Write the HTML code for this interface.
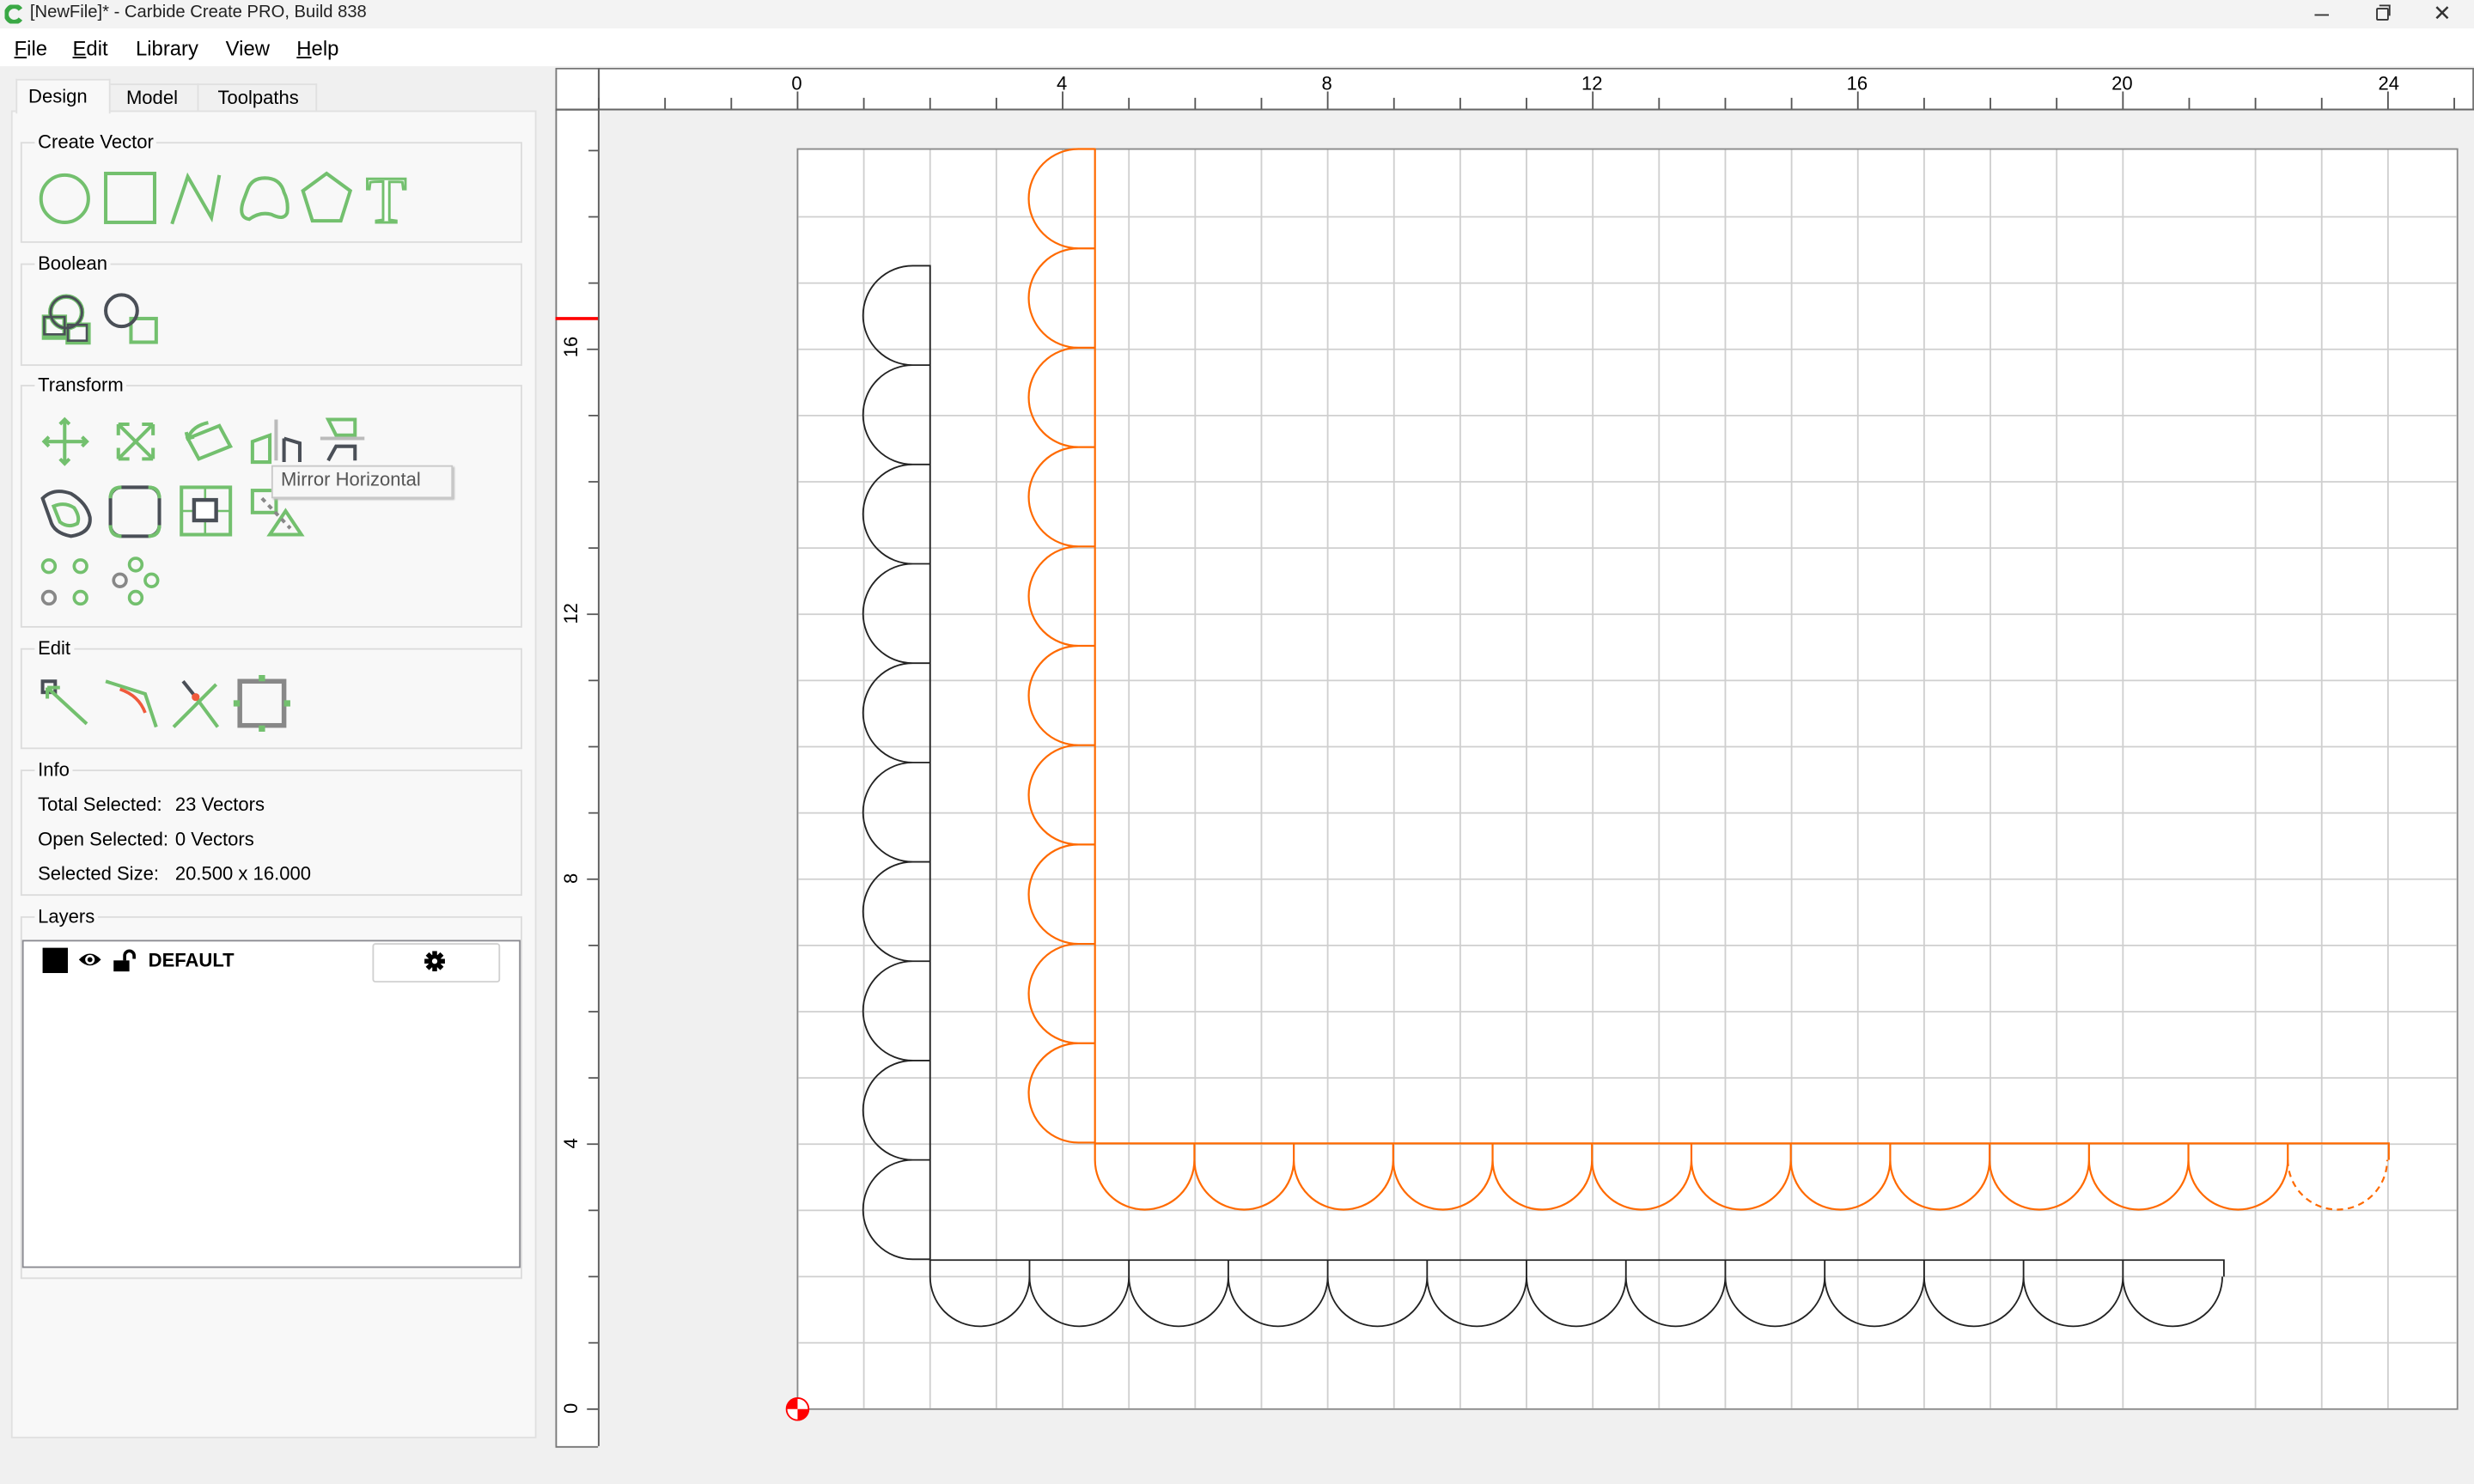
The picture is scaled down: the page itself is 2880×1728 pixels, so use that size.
<!DOCTYPE html>
<html><head><meta charset="utf-8">
<style>
html,body{margin:0;padding:0;width:2880px;height:1728px;overflow:hidden;background:#f0f0f0;}
#root{position:absolute;left:0;top:0;width:1568px;height:941px;transform-origin:0 0;transform:scale(1.83673,1.83634);font-family:"Liberation Sans",sans-serif;font-size:12px;color:#000;background:#f0f0f0;}
.abs{position:absolute;}
.grp{position:absolute;left:13px;width:316px;border:1px solid #dcdcdc;}
.gt{position:absolute;left:8px;top:-8px;background:#f8f8f8;padding:0 2px;font-size:12px;line-height:14px;}
.t{position:absolute;white-space:nowrap;}
</style></head><body><div id="root">
<div class="abs" style="left:0;top:0;width:1568px;height:18px;background:#f3f3f3"></div>
<svg class="abs" style="left:3px;top:3px" width="12" height="12" viewBox="0 0 12 12"><path d="M10 3 A5 5 0 1 0 10 9" fill="none" stroke="#3aa845" stroke-width="3"/></svg>
<div class="t" style="left:19px;top:2px;font-size:11px;color:#222">[NewFile]* - Carbide Create PRO, Build 838</div>
<div class="abs" style="left:1467px;top:9px;width:9px;height:1px;background:#333"></div>
<div class="abs" style="left:1506px;top:5px;width:6px;height:6px;border:1px solid #333;border-radius:1px"></div>
<div class="abs" style="left:1508px;top:3px;width:6px;height:6px;border-top:1px solid #333;border-right:1px solid #333"></div>
<div class="t" style="left:1542px;top:0px;font-size:14px;color:#333">✕</div>
<div class="abs" style="left:0;top:18px;width:1568px;height:24px;background:#fff"></div>
<div class="t" style="left:9px;top:23px;font-size:13px"><u>F</u>ile</div>
<div class="t" style="left:46px;top:23px;font-size:13px"><u>E</u>dit</div>
<div class="t" style="left:86px;top:23px;font-size:13px">Library</div>
<div class="t" style="left:143px;top:23px;font-size:13px">View</div>
<div class="t" style="left:188px;top:23px;font-size:13px"><u>H</u>elp</div>
<div class="abs" style="left:69px;top:53px;width:55px;height:17px;background:#f0f0f0;border:1px solid #e0e0e0;border-bottom:none"></div>
<div class="abs" style="left:125px;top:53px;width:74px;height:17px;background:#f0f0f0;border:1px solid #e0e0e0;border-bottom:none"></div>
<div class="abs" style="left:7px;top:70px;width:331px;height:840px;background:#f8f8f8;border:1px solid #e0e0e0"></div>
<div class="abs" style="left:10px;top:50px;width:58px;height:21px;background:#f8f8f8;border:1px solid #e0e0e0;border-bottom:none"></div>
<div class="t" style="left:18px;top:54px;font-size:12px">Design</div>
<div class="t" style="left:80px;top:55px;font-size:12px">Model</div>
<div class="t" style="left:138px;top:55px;font-size:12px">Toolpaths</div>
<div class="grp" style="top:90px;height:62px"><div class="gt">Create Vector</div></div>
<div class="grp" style="top:167px;height:63px"><div class="gt">Boolean</div></div>
<div class="grp" style="top:244px;height:152px"><div class="gt">Transform</div></div>
<div class="grp" style="top:411px;height:62px"><div class="gt">Edit</div></div>
<div class="grp" style="top:488px;height:78px"><div class="gt">Info</div></div>
<div class="grp" style="top:581px;height:228px"><div class="gt">Layers</div></div>
<div class="t" style="left:24px;top:503px">Total Selected:</div><div class="t" style="left:111px;top:503px">23 Vectors</div>
<div class="t" style="left:24px;top:525px">Open Selected:</div><div class="t" style="left:111px;top:525px">0 Vectors</div>
<div class="t" style="left:24px;top:547px">Selected Size:</div><div class="t" style="left:111px;top:547px">20.500 x 16.000</div>
<div class="abs" style="left:14px;top:596px;width:314px;height:206px;background:#fff;border:1px solid #8a8a90"></div>
<div class="abs" style="left:27px;top:601px;width:16px;height:16px;background:#000"></div>
<svg class="abs" style="left:49px;top:602px" width="16" height="13" viewBox="0 0 16 13"><path d="M1 6.5 Q8 -1 15 6.5 Q8 14 1 6.5Z" fill="#000"/><circle cx="8" cy="6.5" r="3" fill="#fff"/><circle cx="8" cy="6.5" r="1.6" fill="#000"/></svg>
<svg class="abs" style="left:71px;top:601px" width="16" height="16" viewBox="0 0 16 16"><rect x="1" y="8" width="10" height="7" fill="#000"/><path d="M8 8 V5 A3 3 0 0 1 14 5 V7" fill="none" stroke="#000" stroke-width="2"/></svg>
<div class="t" style="left:94px;top:602px;font-weight:bold;font-size:12px">DEFAULT</div>
<div class="abs" style="left:236px;top:598px;width:79px;height:23px;background:#fff;border:1px solid #d0d0d0;border-radius:2px"></div>
<svg class="abs" style="left:269px;top:603px" width="13" height="13" viewBox="0 0 13 13"><g fill="#000"><circle cx="6.5" cy="6.5" r="4.2"/><rect x="5" y="0" width="3" height="13"/><rect x="0" y="5" width="13" height="3"/><rect x="5" y="0" width="3" height="13" transform="rotate(45 6.5 6.5)"/><rect x="5" y="0" width="3" height="13" transform="rotate(-45 6.5 6.5)"/></g><circle cx="6.5" cy="6.5" r="1.7" fill="#fff"/></svg>
<svg class="abs" style="left:0;top:0" width="340" height="480" viewBox="0 0 340 480" fill="none" stroke-width="2.2">
<g stroke="#73c06e">
<ellipse cx="41" cy="126" rx="15" ry="15"/>
<rect x="67" y="110" width="31" height="31"/>
<path d="M109 142 L119 112 L134 138 L139 111"/>
<path d="M157 120 Q160 112 170 113 Q178 114 180 122 Q183 128 182 135 Q180 140 172 136 Q165 134 158 139 Q151 138 154 128Z"/>
<path d="M207 110 L222 121 L216 140 L198 140 L192 121Z"/>
</g>
<text x="232" y="141" font-family="Liberation Serif,serif" font-size="42" fill="#fff" stroke="#73c06e" stroke-width="1.6">T</text>
<rect x="28" y="201" width="13" height="13" stroke="#73c06e" stroke-width="3"/>
<rect x="43" y="206" width="13" height="11" stroke="#73c06e" stroke-width="3"/>
<circle cx="42" cy="198" r="10" stroke="#73c06e" stroke-width="3"/>
<circle cx="42" cy="198" r="10" stroke="#4a4f57" stroke-width="1.6"/>
<rect x="28" y="201" width="13" height="11" stroke="#4a4f57" stroke-width="1.4"/>
<rect x="43" y="206" width="12" height="10" stroke="#4a4f57" stroke-width="1.4"/>
<rect x="83" y="202" width="16" height="15" stroke="#73c06e"/>
<circle cx="77" cy="197" r="10" stroke="#4a4f57"/>
<g stroke="#73c06e">
<path d="M28 280 H55 M41 266 V294 M31 277 L28 280 L31 283 M52 277 L55 280 L52 283 M38 269 L41 266 L44 269 M38 291 L41 294 L44 291"/>
<path d="M75 269 L97 291 M97 269 L75 291 M75 269 h7 M75 269 v7 M97 269 h-7 M97 269 v7 M75 291 h7 M75 291 v-7 M97 291 h-7 M97 291 v-7"/>
<path d="M119 278 L139 270 L146 283 L126 291Z M119 278 Q122 270 132 268 M118 274 l1 4 l4 -1"/>
<path d="M160 293 V280 L171 276 V293Z"/>
<path d="M208 266 H225 V276 H213Z"/>
</g>
<path d="M175 266 V292" stroke="#bbb"/>
<path d="M180 278 L190 281 V293 M180 278 V293" stroke="#4a4f57"/>
<path d="M203 278 H231" stroke="#bbb"/>
<path d="M208 292 L213 283 H225 V292" stroke="#4a4f57"/>
<path d="M27 316 Q34 309 45 313 Q55 319 57 328 Q58 338 45 340 Q34 338 32 330Z" stroke="#4a4f57"/>
<path d="M34 321 Q41 318 47 322 Q51 328 49 332 Q43 335 38 331Z" stroke="#73c06e"/>
<rect x="70" y="309" width="31" height="31" rx="7" stroke="#4a4f57"/>
<path d="M70 316 Q70 309 77 309 M94 309 Q101 309 101 316 M70 333 Q70 340 77 340 M94 340 Q101 340 101 333" stroke="#73c06e"/>
<rect x="115" y="309" width="31" height="30" stroke="#73c06e"/>
<path d="M130 309 V339 M115 324 H146" stroke="#73c06e" stroke-width="1.4"/>
<rect x="123" y="317" width="14" height="13" stroke="#4a4f57" stroke-width="2.4" fill="#fff"/>
<rect x="160" y="311" width="15" height="14" stroke="#73c06e"/>
<path d="M171 339 H191 L181 324Z" stroke="#73c06e"/>
<path d="M166 316 L184 335" stroke="#888" stroke-dasharray="3 3"/>
<g stroke-width="2">
<circle cx="31" cy="359" r="4" stroke="#73c06e"/><circle cx="51" cy="359" r="4" stroke="#73c06e"/>
<circle cx="31" cy="379" r="4" stroke="#888"/><circle cx="51" cy="379" r="4" stroke="#73c06e"/>
<circle cx="86" cy="358" r="4" stroke="#73c06e"/><circle cx="96" cy="368" r="4" stroke="#73c06e"/>
<circle cx="86" cy="379" r="4" stroke="#73c06e"/><circle cx="76" cy="368" r="4" stroke="#888"/>
</g>
<rect x="27" y="432" width="8" height="7" stroke="#4a4f57"/>
<path d="M30 436 L55 459 M30 436 H38 M30 436 V443" stroke="#73c06e"/>
<path d="M67 432 L92 440 L99 461" stroke="#73c06e"/>
<path d="M76 437 Q88 441 92 452" stroke="#f05a3c" stroke-width="2"/>
<path d="M116 432 L124 442" stroke="#4a4f57"/>
<path d="M124 442 L138 461 M110 461 L137 434" stroke="#73c06e"/>
<circle cx="124" cy="442" r="2.5" fill="#f05a3c" stroke="none"/>
<rect x="152" y="432" width="28" height="28" stroke="#888" stroke-width="3"/>
<path d="M166 428 v4 M166 460 v4 M148 446 h4 M180 446 h4" stroke="#73c06e" stroke-width="4"/>
</svg>
<div class="abs" style="left:172px;top:295px;width:113px;height:19px;background:#f7f7f7;border:1px solid #c8c8c8;box-shadow:1px 1px 1px #bbb"></div>
<div class="t" style="left:178px;top:297px;font-size:12px;color:#555">Mirror Horizontal</div>

<svg class="abs" style="left:0;top:0" width="1568" height="941" viewBox="0 0 1568 941">
<rect x="352" y="43" width="1216" height="26" fill="#fff"/>
<rect x="352" y="43" width="27" height="874" fill="#fff"/>
<path d="M352.5 43 V917.5 H379 M352 43.5 H1568 M1567.5 43 V69" stroke="#777" fill="none"/>
<path d="M352 69.5 H1568 M379.5 43 V917" stroke="#666" fill="none" stroke-width="1.2"/>
<rect x="380" y="70" width="1188" height="871" fill="#f0f0f0"/>
<rect x="505.5" y="94.5" width="1052" height="799" fill="#fff" stroke="#888"/>
<g stroke="#cfcfcf" stroke-width="1">
<path d="M547.5 95V893M589.5 95V893M631.5 95V893M673.5 95V893M715.5 95V893M757.5 95V893M799.5 95V893M841.5 95V893M883.5 95V893M925.5 95V893M967.5 95V893M1009.5 95V893M1051.5 95V893M1093.5 95V893M1135.5 95V893M1177.5 95V893M1219.5 95V893M1261.5 95V893M1303.5 95V893M1345.5 95V893M1429.5 95V893M1471.5 95V893M1513.5 95V893"/>
<path d="M506 851.5H1557M506 809.5H1557M506 767.5H1557M506 725.5H1557M506 683.5H1557M506 641.5H1557M506 599.5H1557M506 557.5H1557M506 515.5H1557M506 473.5H1557M506 431.5H1557M506 389.5H1557M506 347.5H1557M506 305.5H1557M506 263.5H1557M506 221.5H1557M506 179.5H1557M506 137.5H1557"/>
</g>
<g stroke="#555" stroke-width="1">
<path d="M379.5 62V69M421.5 62V69M463.5 62V69M505.5 58V69M547.5 62V69M589.5 62V69M631.5 62V69M673.5 58V69M715.5 62V69M757.5 62V69M799.5 62V69M841.5 58V69M883.5 62V69M925.5 62V69M967.5 62V69M1009.5 58V69M1051.5 62V69M1093.5 62V69M1135.5 62V69M1177.5 58V69M1219.5 62V69M1261.5 62V69M1303.5 62V69M1345.5 58V69M1387.5 62V69M1429.5 62V69M1471.5 62V69M1513.5 58V69M1555.5 62V69"/>
<path d="M372 893.5H379M373 851.5H379M373 809.5H379M373 767.5H379M372 725.5H379M373 683.5H379M373 641.5H379M373 599.5H379M372 557.5H379M373 515.5H379M373 473.5H379M373 431.5H379M372 389.5H379M373 347.5H379M373 305.5H379M373 263.5H379M372 221.5H379M373 179.5H379M373 137.5H379M373 95.5H379"/>
</g>
<path d="M352 202H379" stroke="#f00" stroke-width="2"/>
<g font-family="Liberation Sans,sans-serif" font-size="12" fill="#000" text-anchor="middle">
<text x="505" y="57">0</text><text x="673" y="57">4</text><text x="841" y="57">8</text><text x="1009" y="57">12</text><text x="1177" y="57">16</text><text x="1345" y="57">20</text><text x="1514" y="57">24</text>
<text transform="translate(366 893) rotate(-90)">0</text>
<text transform="translate(366 725) rotate(-90)">4</text>
<text transform="translate(366 557) rotate(-90)">8</text>
<text transform="translate(366 389) rotate(-90)">12</text>
<text transform="translate(366 220) rotate(-90)">16</text>
</g>
<g fill="none" stroke="#222" stroke-width="1">
<path d="M589.5 168V799H1409.5V809.5"/>
<path d="M589.5 168.5H578.5a31.5 31.5 0 0 0 0 63h11m-11 0a31.5 31.5 0 0 0 0 63h11m-11 0a31.5 31.5 0 0 0 0 63h11m-11 0a31.5 31.5 0 0 0 0 63h11m-11 0a31.5 31.5 0 0 0 0 63h11m-11 0a31.5 31.5 0 0 0 0 63h11m-11 0a31.5 31.5 0 0 0 0 63h11m-11 0a31.5 31.5 0 0 0 0 63h11m-11 0a31.5 31.5 0 0 0 0 63h11m-11 0a31.5 31.5 0 0 0 0 63h11"/>
<path d="M589.5 799V809.5a31.5 31.5 0 0 0 63 0v-10.5m0 10.5a31.5 31.5 0 0 0 63 0v-10.5m0 10.5a31.5 31.5 0 0 0 63 0v-10.5m0 10.5a31.5 31.5 0 0 0 63 0v-10.5m0 10.5a31.5 31.5 0 0 0 63 0v-10.5m0 10.5a31.5 31.5 0 0 0 63 0v-10.5m0 10.5a31.5 31.5 0 0 0 63 0v-10.5m0 10.5a31.5 31.5 0 0 0 63 0v-10.5m0 10.5a31.5 31.5 0 0 0 63 0v-10.5m0 10.5a31.5 31.5 0 0 0 63 0v-10.5m0 10.5a31.5 31.5 0 0 0 63 0v-10.5m0 10.5a31.5 31.5 0 0 0 63 0v-10.5m0 10.5a31.5 31.5 0 0 0 63 0"/>
</g>
<g fill="none" stroke="#ff6a00" stroke-width="1.2">
<path d="M694 94V725H1514V735.5"/>
<path d="M694 94.5H683.5a31.5 31.5 0 0 0 0 63h10.5m-10.5 0a31.5 31.5 0 0 0 0 63h10.5m-10.5 0a31.5 31.5 0 0 0 0 63h10.5m-10.5 0a31.5 31.5 0 0 0 0 63h10.5m-10.5 0a31.5 31.5 0 0 0 0 63h10.5m-10.5 0a31.5 31.5 0 0 0 0 63h10.5m-10.5 0a31.5 31.5 0 0 0 0 63h10.5m-10.5 0a31.5 31.5 0 0 0 0 63h10.5m-10.5 0a31.5 31.5 0 0 0 0 63h10.5m-10.5 0a31.5 31.5 0 0 0 0 63h10.5"/>
<path d="M694 725V735.5a31.5 31.5 0 0 0 63 0v-10.5m0 10.5a31.5 31.5 0 0 0 63 0v-10.5m0 10.5a31.5 31.5 0 0 0 63 0v-10.5m0 10.5a31.5 31.5 0 0 0 63 0v-10.5m0 10.5a31.5 31.5 0 0 0 63 0v-10.5m0 10.5a31.5 31.5 0 0 0 63 0v-10.5m0 10.5a31.5 31.5 0 0 0 63 0v-10.5m0 10.5a31.5 31.5 0 0 0 63 0v-10.5m0 10.5a31.5 31.5 0 0 0 63 0v-10.5m0 10.5a31.5 31.5 0 0 0 63 0v-10.5m0 10.5a31.5 31.5 0 0 0 63 0v-10.5m0 10.5a31.5 31.5 0 0 0 63 0v-10.5m0 10.5"/>
<path d="M1450 735.5a31.5 31.5 0 0 0 63 0" stroke-dasharray="4 3"/>
</g>
<circle cx="505.5" cy="893.5" r="7" fill="#fff" stroke="#f00" stroke-width="1"/>
<path d="M505.5 893.5V886.5A7 7 0 0 0 498.5 893.5Z M505.5 893.5H512.5A7 7 0 0 1 505.5 900.5Z" fill="#f00"/>
</svg>
</div></body></html>
